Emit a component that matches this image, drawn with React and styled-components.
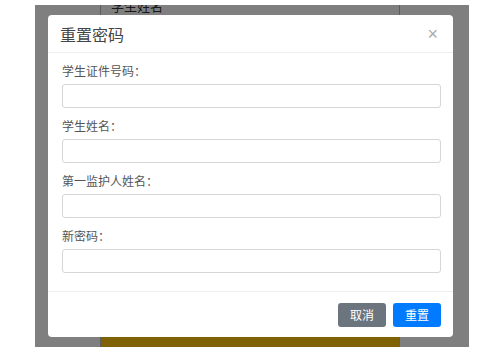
import styled, { createGlobalStyle } from 'styled-components';

const GlobalStyle = createGlobalStyle`
  html, body {
    margin: 0;
    padding: 0;
    background: #fff;
    font-family: "Noto Sans CJK SC", "Noto Sans", sans-serif;
  }
`;

const Screen = styled.div`
  position: relative;
  margin: 5px 0 0 35px;
  width: 434px;
  height: 342px;
  overflow: hidden;
  background: #fff;
`;

const PagePanel = styled.div`
  margin-left: 65px;
  width: 300px;
  height: 100%;
  box-sizing: border-box;
  border-left: 1px solid #bbb;
  border-right: 1px solid #bbb;
  display: flex;
  flex-direction: column;
  justify-content: space-between;
`;

const PageLabel = styled.div`
  margin: -9px 0 0 10px;
  font-size: 13px;
  color: #333;
`;

const PageButton = styled.div`
  height: 22px;
  margin-bottom: -12px;
  background: #ffc40c;
  color: #333;
  font-size: 12px;
  text-align: center;
  line-height: 34px;
`;

const Backdrop = styled.div`
  position: absolute;
  inset: 0;
  background: rgba(0, 0, 0, 0.5);
  padding: 10px 0 0 13px;
`;

const Modal = styled.div`
  width: 405px;
  height: 322px;
  background: #fff;
  border-radius: 4px;
  display: flex;
  flex-direction: column;
`;

const Header = styled.div`
  height: 38px;
  box-sizing: border-box;
  padding: 0 15px 0 12px;
  border-bottom: 1px solid #eee;
  display: flex;
  align-items: center;
  justify-content: space-between;
`;

const Title = styled.div`
  font-size: 16px;
  color: #444;
`;

const Close = styled.span`
  font-family: "Liberation Sans", sans-serif;
  font-size: 18px;
  color: #aaa;
  line-height: 1;
`;

const Body = styled.div`
  flex: 1;
  padding: 9px 12px 0 14px;
  display: flex;
  flex-direction: column;
  gap: 9px;
`;

const Group = styled.div`
  display: flex;
  flex-direction: column;
  gap: 4px;
`;

const Label = styled.label`
  font-size: 12px;
  line-height: 18px;
  color: #555;
`;

const Input = styled.input`
  height: 24px;
  box-sizing: border-box;
  border: 1px solid #d6d6d6;
  border-radius: 3px;
  padding: 0 6px;
  font-size: 12px;
  outline: none;
`;

const Footer = styled.div`
  height: 45px;
  border-top: 1px solid #eee;
  display: flex;
  align-items: center;
  justify-content: flex-end;
  gap: 7px;
  padding: 0 12px;
`;

const Button = styled.button`
  height: 24px;
  width: 48px;
  border: none;
  border-radius: 3px;
  color: #fff;
  font-family: inherit;
  font-size: 12px;
  background: ${p => (p.primary ? '#007bff' : '#6c757d')};
  padding: 0;
`;

const fields = ['学生证件号码：', '学生姓名：', '第一监护人姓名：', '新密码：'];

export default function App() {
  return (
    <>
      <GlobalStyle />
      <Screen>
        <PagePanel>
          <PageLabel>学生姓名</PageLabel>
          <PageButton>修改密码</PageButton>
        </PagePanel>
        <Backdrop>
          <Modal>
            <Header>
              <Title>重置密码</Title>
              <Close>×</Close>
            </Header>
            <Body>
              {fields.map(f => (
                <Group key={f}>
                  <Label>{f}</Label>
                  <Input type={f === '新密码：' ? 'password' : 'text'} />
                </Group>
              ))}
            </Body>
            <Footer>
              <Button>取消</Button>
              <Button primary>重置</Button>
            </Footer>
          </Modal>
        </Backdrop>
      </Screen>
    </>
  );
}
